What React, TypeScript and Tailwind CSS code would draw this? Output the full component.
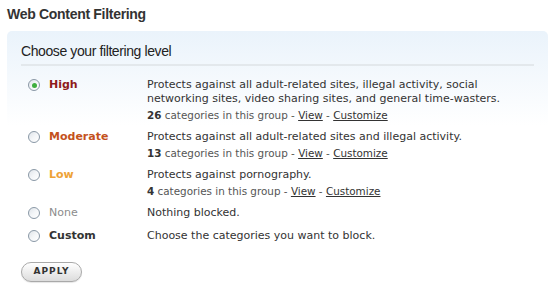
import React, { useState } from 'react';

type Level = {
  id: string;
  label: string;
  labelClass: string;
  description: string[];
  count?: number;
};

const levels: Level[] = [
  {
    id: 'high',
    label: 'High',
    labelClass: 'text-[#8e1b1b] font-bold',
    description: [
      'Protects against all adult-related sites, illegal activity, social',
      'networking sites, video sharing sites, and general time-wasters.',
    ],
    count: 26,
  },
  {
    id: 'moderate',
    label: 'Moderate',
    labelClass: 'text-[#c4521c] font-bold',
    description: ['Protects against all adult-related sites and illegal activity.'],
    count: 13,
  },
  {
    id: 'low',
    label: 'Low',
    labelClass: 'text-[#eea236] font-bold',
    description: ['Protects against pornography.'],
    count: 4,
  },
  {
    id: 'none',
    label: 'None',
    labelClass: 'text-[#8c8c8c]',
    description: ['Nothing blocked.'],
  },
  {
    id: 'custom',
    label: 'Custom',
    labelClass: 'text-[#333] font-bold',
    description: ['Choose the categories you want to block.'],
  },
];

const Radio = ({ checked }: { checked: boolean }) => (
  <span className="w-[12px] h-[12px] rounded-full border border-[#8a98a6] bg-gradient-to-br from-[#dfe4e9] via-[#f4f6f8] to-white flex items-center justify-center shrink-0">
    {checked && <span className="w-[5px] h-[5px] rounded-full bg-[#3fae3f]" />}
  </span>
);

export default function App() {
  const [selected, setSelected] = useState('high');

  return (
    <div className="w-[555px] h-[305px] bg-white text-[#333] overflow-hidden">
      <h1 className="pl-[7px] pt-[5px] text-[14px] leading-[18px] font-bold tracking-[-0.3px] text-[#333] font-['Liberation_Sans',Arial,sans-serif]">
        Web Content Filtering
      </h1>

      <div className="mx-[7px] mt-[8px] w-[541px] rounded-[5px] bg-gradient-to-b from-[#eaf3fb] via-white via-[35%] to-white pt-[11px] pb-[20px]">
        <div className="mx-[14px] border-b-2 border-[#e3e8ec] pb-[4px]">
          <h2 className="text-[14px] leading-[18px] tracking-[-0.4px] text-[#222] font-['Liberation_Sans',Arial,sans-serif]">
            Choose your filtering level
          </h2>
        </div>

        <div className="mt-[12px] flex flex-col gap-[8px] font-['DejaVu_Sans',Verdana,sans-serif]">
          {levels.map((lvl) => (
            <label
              key={lvl.id}
              className={`flex cursor-pointer ${lvl.id === 'none' ? 'mb-[1px]' : ''}`}
              onClick={() => setSelected(lvl.id)}
            >
              <div className="w-[140px] pl-[21px] flex items-start gap-[9px]">
                <span className="h-[14px] flex items-center">
                  <Radio checked={selected === lvl.id} />
                </span>
                <span className={`text-[11px] leading-[14px] ${lvl.labelClass}`}>{lvl.label}</span>
              </div>
              <div className="flex-1">
                {lvl.description.map((line) => (
                  <p key={line} className="text-[11px] leading-[14px] text-[#333]">
                    {line}
                  </p>
                ))}
                {lvl.count !== undefined && (
                  <p className="mt-[2px] text-[10.4px] leading-[14px] text-[#555]">
                    <span className="font-bold text-[#333]">{lvl.count}</span> categories in this group -{' '}
                    <a href="#" className="underline text-[#333]">View</a> -{' '}
                    <a href="#" className="underline text-[#333]">Customize</a>
                  </p>
                )}
              </div>
            </label>
          ))}
        </div>

        <div className="mt-[13px] pl-[14px]">
          <button className="w-[61px] h-[20px] rounded-full border border-[#a9a9a9] bg-gradient-to-b from-white to-[#dcdcdc] text-[9px] font-bold tracking-[1px] text-[#333] font-['DejaVu_Sans',Verdana,sans-serif] shadow-[0_1px_1px_rgba(0,0,0,0.1)]">
            APPLY
          </button>
        </div>
      </div>
    </div>
  );
}
